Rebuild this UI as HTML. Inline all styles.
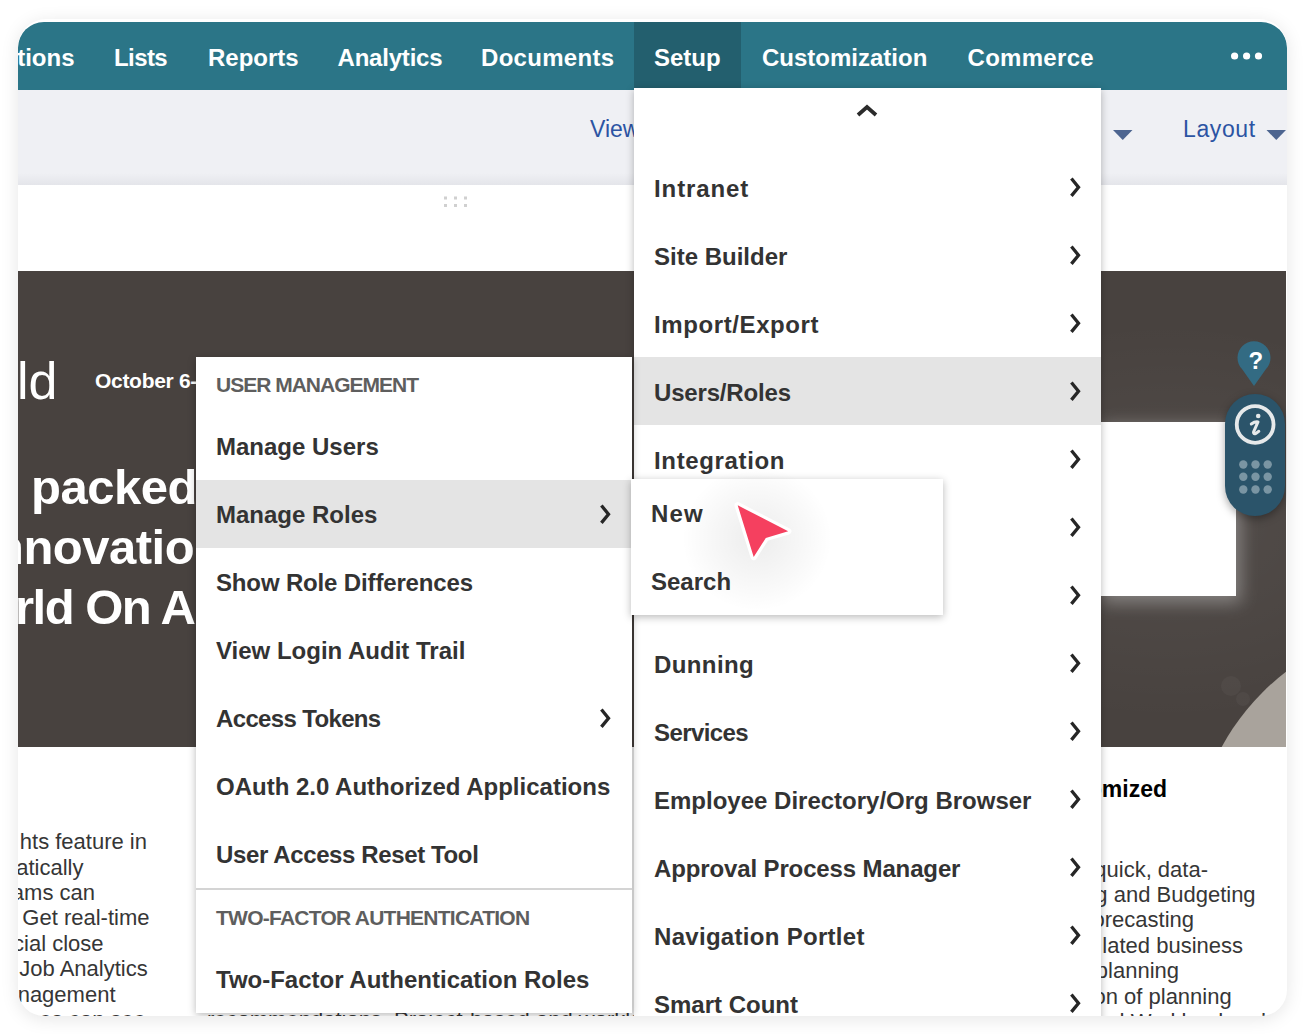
<!DOCTYPE html>
<html><head><meta charset="utf-8">
<style>
*{box-sizing:border-box;margin:0;padding:0}
html,body{width:1306px;height:1034px;overflow:hidden;background:#fff;font-family:"Liberation Sans",sans-serif}
#card{position:absolute;left:18px;top:19px;width:1269px;height:996.5px;border-radius:28px 28px 26px 26px;background:#fff;overflow:hidden;box-shadow:0 3px 18px rgba(0,0,0,.10)}
#in{position:absolute;left:-18px;top:-19px;width:1306px;height:1034px}
#nav{position:absolute;left:18px;top:22px;width:1269px;height:68px;background:#2b7587;border-radius:26px 26px 0 0;overflow:hidden}
.nv{position:absolute;top:2px;height:68px;line-height:68px;color:#fff;font-weight:bold;font-size:24px;white-space:nowrap}
#sub{position:absolute;left:18px;top:90px;width:1269px;height:95px;background:#eff0f4}
.blue{color:#2c54a3;font-size:23px;position:absolute;white-space:nowrap}
#banner{position:absolute;left:18px;top:271px;width:1268px;height:476px;background:#48423f;overflow:hidden}
.menu{position:absolute;background:#fff;box-shadow:0 2px 8px rgba(0,0,0,.28)}
.it{position:absolute;left:0;width:100%;height:68px;line-height:68px;padding-top:2px;padding-left:20px;font-size:24px;font-weight:bold;color:#333;white-space:nowrap}
.hl{background:#e4e4e4}
.lm .it{padding-top:1px}
.chev{position:absolute;top:20px;width:20px;height:28px}
.hd{position:absolute;left:20px;font-size:21px;letter-spacing:-1px;font-weight:bold;color:#5e5e5e;white-space:nowrap}
.txt{position:absolute;font-size:22px;color:#363636;line-height:25.4px;white-space:nowrap}
.wt{position:absolute;color:#fff;white-space:nowrap}
</style></head><body>
<div id="card"><div id="in">
  <div id="nav">
    <div class="nv" style="right:1212.5px">ctions</div>
    <div class="nv" style="left:96px;letter-spacing:-0.6px">Lists</div>
    <div class="nv" style="left:190px">Reports</div>
    <div class="nv" style="left:319.5px;letter-spacing:-0.2px">Analytics</div>
    <div class="nv" style="left:463px;letter-spacing:0.3px">Documents</div>
    <div style="position:absolute;left:616px;top:0;width:107px;height:68px;background:#235f6e"></div>
    <div class="nv" style="left:636px">Setup</div>
    <div class="nv" style="left:744px">Customization</div>
    <div class="nv" style="left:949.5px;letter-spacing:0.3px">Commerce</div>
    <svg style="position:absolute;left:1210px;top:26.3px" width="40" height="16"><g fill="#fff"><circle cx="6.6" cy="8" r="3.6"/><circle cx="18.6" cy="8" r="3.6"/><circle cx="30.5" cy="8" r="3.6"/></g></svg>
  </div>
  <div id="sub">
    <div class="blue" style="left:572px;top:26px">View</div>
    <div class="blue" style="left:1165px;top:26px;letter-spacing:0.6px">Layout</div>
  </div>
  <div id="banner"></div>

  <!-- content card top -->
  <div style="position:absolute;left:18px;top:173px;width:1269px;height:12px;background:linear-gradient(#eff0f4,#e4e5ea)"></div>
  <div style="position:absolute;left:18px;top:185px;width:1268px;height:90px;background:#fff;border-radius:0 7px 0 0"></div>
  <svg style="position:absolute;left:440px;top:193px" width="32" height="18">
    <g fill="#d0d0d0"><rect x="4" y="3.5" width="3" height="3"/><rect x="14" y="3.5" width="3" height="3"/><rect x="24" y="3.5" width="3" height="3"/>
    <rect x="4" y="11" width="3" height="3"/><rect x="14" y="11" width="3" height="3"/><rect x="24" y="11" width="3" height="3"/></g>
  </svg>
  <svg style="position:absolute;left:1113px;top:129px" width="20" height="12"><path d="M0 1 L19.5 1 L9.75 11 Z" fill="#4d6590"/></svg>
  <svg style="position:absolute;left:1266px;top:129px" width="21" height="12"><path d="M0.5 1 L20 1 L10.25 11 Z" fill="#4d6590"/></svg>

  <!-- banner -->
  <div id="banner">
    <div style="position:absolute;left:0;top:0;width:100%;height:100%;background:radial-gradient(ellipse 300px 200px at 1150px 250px, rgba(255,255,255,.06), rgba(255,255,255,0))"></div>
    <div style="position:absolute;left:1083px;top:151px;width:135px;height:174px;background:#fff;box-shadow:3px 5px 16px 2px rgba(210,210,210,.42)"></div>
    <div style="position:absolute;left:1175px;top:352px;width:474px;height:474px;border-radius:50%;background:#a9a39c"></div>
    <div style="position:absolute;left:1203px;top:405px;width:20px;height:20px;border-radius:50%;background:rgba(255,255,255,.035)"></div><div style="position:absolute;left:1218px;top:421px;width:14px;height:14px;border-radius:50%;background:rgba(255,255,255,.035)"></div>
  </div>
  <div class="wt" style="left:17px;top:353px;font-size:52px;line-height:56px">ld</div>
  <div class="wt" style="left:95px;top:369px;font-size:21px;font-weight:bold;line-height:24px;letter-spacing:-0.3px">October 6-</div>
  <div class="wt" style="left:31px;top:457px;font-size:49px;font-weight:bold;line-height:60px;letter-spacing:-0.5px">packed</div>
  <div class="wt" style="left:-6px;top:517px;font-size:49px;font-weight:bold;line-height:60px;letter-spacing:-0.5px">nnovation</div>
  <div class="wt" style="left:15px;top:577px;font-size:49px;font-weight:bold;line-height:60px;letter-spacing:-1.5px">rld On Air</div>

  <!-- body text left -->
  <div class="txt" style="right:1159px;top:829.2px">Insi hts feature in</div>
  <div class="txt" style="right:1222.6px;top:854.6px">automatically</div>
  <div class="txt" style="right:1211px;top:880.0px">teams can</div>
  <div class="txt" style="right:1156.5px;top:905.4px">e. Get real-time</div>
  <div class="txt" style="right:1202.5px;top:930.8px">financial close</div>
  <div class="txt" style="right:1158.3px;top:956.2px">d Job Analytics</div>
  <div class="txt" style="right:1190.5px;top:981.6px">management</div>
  <div class="txt" style="right:1160px;top:1007.0px">our ones can see</div>
  <!-- body text right -->
  <div class="txt" style="right:139px;top:776.5px;font-weight:bold;color:#000;font-size:23px">Customized</div>
  <div class="txt" style="right:98px;top:856.5px">provide quick, data-</div>
  <div class="txt" style="right:50.4px;top:881.9px">Planning and Budgeting</div>
  <div class="txt" style="right:112px;top:907.3px">forecasting</div>
  <div class="txt" style="right:63px;top:932.7px">the lated business</div>
  <div class="txt" style="right:127px;top:958.1px">planning</div>
  <div class="txt" style="right:74.3px;top:983.5px">ation of planning</div>
  <div class="txt" style="right:40px;top:1008.9px">and Workload and</div>
  <div class="txt" style="left:207px;top:1007px">recommendations. Project-based and workload</div>
  <!-- help widget -->
  <svg style="position:absolute;left:1236px;top:340px" width="36" height="48" viewBox="0 0 36 48">
    <path d="M18 46 L6 29 A16.5 16.5 0 1 1 30 29 Z" fill="#336b83"/>
    <text x="19.8" y="29" text-anchor="middle" font-family="Liberation Sans" font-weight="bold" font-size="24" fill="#fff">?</text>
  </svg>
  <div style="position:absolute;left:1225px;top:394px;width:60px;height:122px;border-radius:30px;background:#2b546a;box-shadow:0 3px 8px rgba(0,0,0,.35)"></div>
  <svg style="position:absolute;left:1225px;top:394px" width="60" height="122" viewBox="0 0 60 122">
    <circle cx="30.15" cy="30.45" r="18.4" fill="none" stroke="#e6e9ea" stroke-width="3.8"/>
    <circle cx="33.2" cy="22" r="2.3" fill="#e6e9ea"/><path d="M26.3 30 C28.5 28.4 31 27.6 33 27.9 L28.6 37.8 C28 39.6 29.2 40.3 30.8 39.4 L33.8 37.3" fill="none" stroke="#e6e9ea" stroke-width="3" stroke-linecap="round" stroke-linejoin="round"/>
    <g fill="#7a95a3"><circle cx="18.3" cy="70.5" r="4.2"/><circle cx="30.5" cy="70.5" r="4.2"/><circle cx="42.7" cy="70.5" r="4.2"/>
    <circle cx="18.3" cy="82.7" r="4.2"/><circle cx="30.5" cy="82.7" r="4.2"/><circle cx="42.7" cy="82.7" r="4.2"/>
    <circle cx="18.3" cy="95.5" r="4.2"/><circle cx="30.5" cy="95.5" r="4.2"/><circle cx="42.7" cy="95.5" r="4.2"/></g>
  </svg>

<!-- Setup menu -->
<div class="menu" style="left:634px;top:88px;width:467px;height:940px">
  <svg style="position:absolute;left:221.4px;top:16px" width="24" height="14" viewBox="0 0 24 14"><path d="M3 11 L12 3 L21 11" fill="none" stroke="#2b2b2b" stroke-width="3.8"/></svg>
  <div class="it" style="top:65px;letter-spacing:0.9px">Intranet<svg class="chev" style="left:432px" viewBox="0 0 20 28"><path d="M5.4 5.5 L12.5 14.2 L5.4 22.9" fill="none" stroke="#262626" stroke-width="3.3"/></svg></div>
  <div class="it" style="top:133px">Site Builder<svg class="chev" style="left:432px" viewBox="0 0 20 28"><path d="M5.4 5.5 L12.5 14.2 L5.4 22.9" fill="none" stroke="#262626" stroke-width="3.3"/></svg></div>
  <div class="it" style="top:201px;letter-spacing:0.6px">Import/Export<svg class="chev" style="left:432px" viewBox="0 0 20 28"><path d="M5.4 5.5 L12.5 14.2 L5.4 22.9" fill="none" stroke="#262626" stroke-width="3.3"/></svg></div>
  <div class="it hl" style="top:269px;letter-spacing:-0.17px">Users/Roles<svg class="chev" style="left:432px" viewBox="0 0 20 28"><path d="M5.4 5.5 L12.5 14.2 L5.4 22.9" fill="none" stroke="#262626" stroke-width="3.3"/></svg></div>
  <div class="it" style="top:337px;letter-spacing:0.65px">Integration<svg class="chev" style="left:432px" viewBox="0 0 20 28"><path d="M5.4 5.5 L12.5 14.2 L5.4 22.9" fill="none" stroke="#262626" stroke-width="3.3"/></svg></div>
  <div class="it" style="top:405px"><svg class="chev" style="left:432px" viewBox="0 0 20 28"><path d="M5.4 5.5 L12.5 14.2 L5.4 22.9" fill="none" stroke="#262626" stroke-width="3.3"/></svg></div>
  <div class="it" style="top:473px"><svg class="chev" style="left:432px" viewBox="0 0 20 28"><path d="M5.4 5.5 L12.5 14.2 L5.4 22.9" fill="none" stroke="#262626" stroke-width="3.3"/></svg></div>
  <div class="it" style="top:541px;letter-spacing:0.4px">Dunning<svg class="chev" style="left:432px" viewBox="0 0 20 28"><path d="M5.4 5.5 L12.5 14.2 L5.4 22.9" fill="none" stroke="#262626" stroke-width="3.3"/></svg></div>
  <div class="it" style="top:609px;letter-spacing:-0.6px">Services<svg class="chev" style="left:432px" viewBox="0 0 20 28"><path d="M5.4 5.5 L12.5 14.2 L5.4 22.9" fill="none" stroke="#262626" stroke-width="3.3"/></svg></div>
  <div class="it" style="top:677px">Employee Directory/Org Browser<svg class="chev" style="left:432px" viewBox="0 0 20 28"><path d="M5.4 5.5 L12.5 14.2 L5.4 22.9" fill="none" stroke="#262626" stroke-width="3.3"/></svg></div>
  <div class="it" style="top:745px;letter-spacing:-0.13px">Approval Process Manager<svg class="chev" style="left:432px" viewBox="0 0 20 28"><path d="M5.4 5.5 L12.5 14.2 L5.4 22.9" fill="none" stroke="#262626" stroke-width="3.3"/></svg></div>
  <div class="it" style="top:813px;letter-spacing:0.3px">Navigation Portlet<svg class="chev" style="left:432px" viewBox="0 0 20 28"><path d="M5.4 5.5 L12.5 14.2 L5.4 22.9" fill="none" stroke="#262626" stroke-width="3.3"/></svg></div>
  <div class="it" style="top:881px">Smart Count<svg class="chev" style="left:432px" viewBox="0 0 20 28"><path d="M5.4 5.5 L12.5 14.2 L5.4 22.9" fill="none" stroke="#262626" stroke-width="3.3"/></svg></div>
</div>

<!-- Left menu -->
<div class="menu lm" style="left:196px;top:357px;width:436px;height:656px">
  <div class="hd" style="top:16px">USER MANAGEMENT</div>
  <div class="it" style="top:55px">Manage Users</div>
  <div class="it hl" style="top:123px">Manage Roles<svg class="chev" style="left:400px" viewBox="0 0 20 28"><path d="M5.4 5.5 L12.5 14.2 L5.4 22.9" fill="none" stroke="#262626" stroke-width="3.3"/></svg></div>
  <div class="it" style="top:191px;letter-spacing:-0.15px">Show Role Differences</div>
  <div class="it" style="top:259px">View Login Audit Trail</div>
  <div class="it" style="top:327px;letter-spacing:-0.65px">Access Tokens<svg class="chev" style="left:400px" viewBox="0 0 20 28"><path d="M5.4 5.5 L12.5 14.2 L5.4 22.9" fill="none" stroke="#262626" stroke-width="3.3"/></svg></div>
  <div class="it" style="top:395px">OAuth 2.0 Authorized Applications</div>
  <div class="it" style="top:463px;letter-spacing:-0.38px">User Access Reset Tool</div>
  <div style="position:absolute;left:0;top:531px;width:100%;height:2px;background:#d4d4d4"></div>
  <div class="hd" style="top:549px;letter-spacing:-0.75px">TWO-FACTOR AUTHENTICATION</div>
  <div class="it" style="top:588px">Two-Factor Authentication Roles</div>
</div>

<!-- Sub menu -->
<div class="menu lm" style="left:631px;top:479px;width:312px;height:136px">
  <div class="it" style="top:0px;letter-spacing:1.2px">New</div>
  <div class="it" style="top:68px">Search</div>
</div>

<!-- cursor -->
<div style="position:absolute;left:682px;top:466px;width:150px;height:145px;border-radius:50%;background:radial-gradient(closest-side, rgba(0,0,0,.075), rgba(0,0,0,.025) 70%, rgba(0,0,0,0))"></div>
<svg style="position:absolute;left:720px;top:490px" width="90" height="85" viewBox="720 490 90 85">
  <path d="M737.7 505.3 L788.2 531.3 L765.8 538 L753.7 556.9 Z" fill="#f5405f" stroke="#fff" stroke-width="6.5" stroke-linejoin="round" paint-order="stroke"/>
</svg>
</div></div>
</body></html>
